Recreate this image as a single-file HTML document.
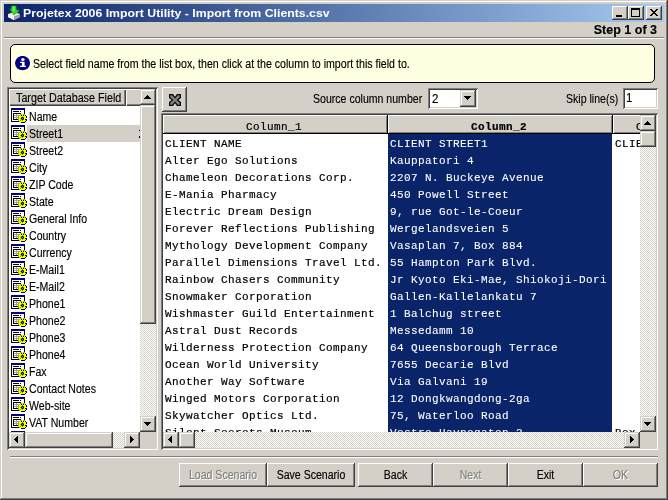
<!DOCTYPE html>
<html>
<head>
<meta charset="utf-8">
<title>Projetex 2006 Import Utility</title>
<style>
*{box-sizing:border-box;margin:0;padding:0}
html,body{width:668px;height:500px;overflow:hidden;background:#d4d0c8}
body{font-family:"Liberation Sans",sans-serif;font-size:12px;color:#000;position:relative}
.abs{position:absolute}
#win{position:absolute;left:0;top:0;width:668px;height:500px;background:#d4d0c8;will-change:transform;
 box-shadow:inset -1px -1px #404040,inset 1px 1px #d4d0c8,inset -2px -2px #808080,inset 2px 2px #fff}
#title{position:absolute;left:4px;top:4px;width:660px;height:18px;
 background:linear-gradient(90deg,#0a246a 0%,#a6caf0 100%)}
#ttext{position:absolute;left:23px;top:6px;height:14px;line-height:14px;font-size:11px;font-weight:bold;color:#fff;white-space:nowrap;
 transform-origin:0 0;transform:scaleX(1.117)}
.cb{position:absolute;top:6px;width:16px;height:14px;background:#d4d0c8;
 box-shadow:inset -1px -1px #404040,inset 1px 1px #fff,inset -2px -2px #808080,inset 2px 2px #d4d0c8}
.t{position:absolute;white-space:nowrap;transform-origin:0 0;transform:scaleX(.88);font-size:12px;line-height:14px;height:14px;-webkit-text-stroke:.15px currentColor}
.tr{transform-origin:100% 0}
.tc{transform-origin:50% 0;text-align:center}
.raised{background:#d4d0c8;box-shadow:inset -1px -1px #404040,inset 1px 1px #fff,inset -2px -2px #808080,inset 2px 2px #d4d0c8}
.btn{position:absolute;top:463px;height:24px;background:#d4d0c8;
 box-shadow:inset -1px -1px #404040,inset 1px 1px #fff,inset -2px -2px #808080}
.btn .t{left:0;right:0;top:5px}
.dis{color:#808080;text-shadow:1px 1px 0 #fff}
.sunken{position:absolute;box-shadow:inset 1px 1px #808080,inset -1px -1px #fff,inset 2px 2px #404040,inset -2px -2px #d4d0c8}
.sb{position:absolute;width:16px;height:16px;background:#d4d0c8;
 box-shadow:inset -1px -1px #404040,inset 1px 1px #d4d0c8,inset -2px -2px #808080,inset 2px 2px #fff}
.track{position:absolute;background-color:#fff;
 background-image:linear-gradient(45deg,#d4d0c8 25%,transparent 25%,transparent 75%,#d4d0c8 75%),linear-gradient(45deg,#d4d0c8 25%,transparent 25%,transparent 75%,#d4d0c8 75%);
 background-size:2px 2px;background-position:0 0,1px 1px}
.ar{position:absolute;display:block}
.au{left:4px;top:6px}
.ad{left:4px;top:6px}
.al{left:5px;top:4px}
.arr{left:6px;top:4px}
.hd{position:absolute;background:#d4d0c8;box-shadow:inset 1px 1px #fff,inset -1px -1px #404040,inset -2px -2px #808080}
.ghd{box-shadow:inset 1px 1px #fff,inset -1px -1px #808080}
.li{position:absolute;left:9px;width:131px;height:17px}
.li svg{position:absolute;left:2px;top:0}
.li .t{left:20px;top:2px;line-height:15px;height:15px}
.mono{font-family:"Liberation Mono",monospace;font-size:11px;letter-spacing:.4px;white-space:pre;-webkit-text-stroke:.2px currentColor}
.row{position:absolute;height:17px;line-height:17px;left:0}
</style>
</head>
<body>
<svg width="0" height="0" style="position:absolute">
 <defs>
  <g id="fld" shape-rendering="crispEdges">
   <rect x="0" y="0" width="14" height="14" fill="#000"/>
   <rect x="1" y="2" width="12" height="11" fill="#fff"/>
   <rect x="0" y="0" width="14" height="2" fill="#000080"/>
   <rect x="2" y="3" width="6" height="1" fill="#000"/>
   <rect x="9" y="3" width="1" height="1" fill="#000"/>
   <rect x="2" y="5" width="8" height="7" fill="#000"/>
   <rect x="3" y="6" width="6" height="5" fill="#fff"/>
   <rect x="5" y="6" width="1" height="5" fill="#a0a0a0"/>
   <rect x="3" y="7" width="6" height="1" fill="#a0a0a0"/>
   <rect x="3" y="9" width="6" height="1" fill="#a0a0a0"/>
   <g><rect x="9" y="6" width="1" height="1" fill="#b0b000"/><rect x="10" y="6" width="1" height="1" fill="#b0b000"/><rect x="11" y="6" width="1" height="1" fill="#ffff00"/><rect x="12" y="6" width="1" height="1" fill="#b0b000"/><rect x="13" y="6" width="1" height="1" fill="#b0b000"/><rect x="8" y="7" width="1" height="1" fill="#b0b000"/><rect x="9" y="7" width="1" height="1" fill="#ffff00"/><rect x="10" y="7" width="1" height="1" fill="#000"/><rect x="11" y="7" width="1" height="1" fill="#ffff00"/><rect x="12" y="7" width="1" height="1" fill="#000"/><rect x="13" y="7" width="1" height="1" fill="#ffff00"/><rect x="14" y="7" width="1" height="1" fill="#000"/><rect x="7" y="8" width="1" height="1" fill="#b0b000"/><rect x="8" y="8" width="1" height="1" fill="#ffff00"/><rect x="9" y="8" width="1" height="1" fill="#ffff00"/><rect x="10" y="8" width="1" height="1" fill="#ffff00"/><rect x="11" y="8" width="1" height="1" fill="#00e000"/><rect x="12" y="8" width="1" height="1" fill="#ffff00"/><rect x="13" y="8" width="1" height="1" fill="#ffff00"/><rect x="14" y="8" width="1" height="1" fill="#ffff00"/><rect x="15" y="8" width="1" height="1" fill="#000"/><rect x="7" y="9" width="1" height="1" fill="#b0b000"/><rect x="8" y="9" width="1" height="1" fill="#ffff00"/><rect x="9" y="9" width="1" height="1" fill="#ffff00"/><rect x="10" y="9" width="1" height="1" fill="#707000"/><rect x="11" y="9" width="1" height="1" fill="#000"/><rect x="12" y="9" width="1" height="1" fill="#707000"/><rect x="13" y="9" width="1" height="1" fill="#ffff00"/><rect x="14" y="9" width="1" height="1" fill="#ffff00"/><rect x="15" y="9" width="1" height="1" fill="#000"/><rect x="7" y="10" width="1" height="1" fill="#b0b000"/><rect x="8" y="10" width="1" height="1" fill="#ffff00"/><rect x="9" y="10" width="1" height="1" fill="#00e000"/><rect x="10" y="10" width="1" height="1" fill="#000"/><rect x="11" y="10" width="1" height="1" fill="#808080"/><rect x="12" y="10" width="1" height="1" fill="#000"/><rect x="13" y="10" width="1" height="1" fill="#ffff00"/><rect x="14" y="10" width="1" height="1" fill="#ffff00"/><rect x="15" y="10" width="1" height="1" fill="#ffff00"/><rect x="7" y="11" width="1" height="1" fill="#b0b000"/><rect x="8" y="11" width="1" height="1" fill="#ffff00"/><rect x="9" y="11" width="1" height="1" fill="#ffff00"/><rect x="10" y="11" width="1" height="1" fill="#707000"/><rect x="11" y="11" width="1" height="1" fill="#000"/><rect x="12" y="11" width="1" height="1" fill="#707000"/><rect x="13" y="11" width="1" height="1" fill="#ffff00"/><rect x="14" y="11" width="1" height="1" fill="#000"/><rect x="15" y="11" width="1" height="1" fill="#000"/><rect x="7" y="12" width="1" height="1" fill="#b0b000"/><rect x="8" y="12" width="1" height="1" fill="#ffff00"/><rect x="9" y="12" width="1" height="1" fill="#00e000"/><rect x="10" y="12" width="1" height="1" fill="#ffff00"/><rect x="11" y="12" width="1" height="1" fill="#00e000"/><rect x="12" y="12" width="1" height="1" fill="#ffff00"/><rect x="13" y="12" width="1" height="1" fill="#ffff00"/><rect x="14" y="12" width="1" height="1" fill="#ffff00"/><rect x="15" y="12" width="1" height="1" fill="#000"/><rect x="8" y="13" width="1" height="1" fill="#b0b000"/><rect x="9" y="13" width="1" height="1" fill="#ffff00"/><rect x="10" y="13" width="1" height="1" fill="#ffff00"/><rect x="11" y="13" width="1" height="1" fill="#ffff00"/><rect x="12" y="13" width="1" height="1" fill="#ffff00"/><rect x="13" y="13" width="1" height="1" fill="#ffff00"/><rect x="14" y="13" width="1" height="1" fill="#000"/><rect x="10" y="14" width="1" height="1" fill="#000"/><rect x="11" y="14" width="1" height="1" fill="#000"/><rect x="12" y="14" width="1" height="1" fill="#000"/><rect x="13" y="14" width="1" height="1" fill="#000"/></g>
  </g>
 </defs>
</svg>
<div id="win">
 <!-- title bar -->
 <div id="title"></div>
 <svg class="abs" style="left:6px;top:4px" width="18" height="18" viewBox="0 0 18 18">
  <path d="M2 10 L8 8 L14 10 L14 13 L8 16 L2 13 Z" fill="#e8e8e8"/>
  <path d="M8 12.5 L14 10 L14 13 L8 16 Z" fill="#a0a0a0"/>
  <path d="M2 10 L8 12.5 L8 16 L2 13 Z" fill="#f4f4f4"/>
  <path d="M5.6 2 L10 2 L10.1 5.4 L13.3 7 L7.8 11 L3.9 4.9 L5.6 4.7 Z" fill="#2fd422" stroke="#18b010" stroke-width=".5"/><path d="M6.8 2.6 L8.6 2.6 L8.8 6.4 L7.6 8.6 L6.6 5.4 Z" fill="#7bea6a"/>
 </svg>
 <div id="ttext">Projetex 2006 Import Utility - Import from Clients.csv</div>
 <div class="cb" style="left:612px"><div class="abs" style="left:4px;top:9px;width:6px;height:2px;background:#000"></div></div>
 <div class="cb" style="left:628px"><div class="abs" style="left:3px;top:2px;width:9px;height:9px;border:1px solid #000;border-top-width:2px"></div></div>
 <div class="cb" style="left:646px">
  <svg class="abs" style="left:4px;top:3px" width="8" height="7" viewBox="0 0 8 7" shape-rendering="crispEdges"><path d="M0 0h2v1h1v1h2v-1h1v-1h2v1h-1v1h-1v1h-1v1h1v1h1v1h1v1h-2v-1h-1v-1h-2v1h-1v1h-2v-1h1v-1h1v-1h1v-1h-1v-1h-1v-1h-1z" fill="#000"/></svg>
 </div>

 <div class="t tr" style="right:11px;top:23px;font-size:12.5px;font-weight:bold;transform:none">Step 1 of 3</div>
 <div class="abs" style="left:4px;top:37px;width:660px;height:1px;background:#808080"></div>
 <div class="abs" style="left:4px;top:38px;width:660px;height:1px;background:#fff"></div>

 <!-- info panel -->
 <div class="abs" style="left:10px;top:44px;width:645px;height:39px;background:#ffffe1;border:1px solid #000;border-radius:5px"></div>
 <svg class="abs" style="left:15px;top:56px" width="16" height="16" viewBox="0 0 16 16">
  <ellipse cx="7.55" cy="7.1" rx="7.55" ry="7.2" fill="#000080"/>
  <ellipse cx="7.9" cy="3.6" rx="1.7" ry="1.5" fill="#fff"/>
  <path d="M5 5.8 H9.6 V9.7 H10.9 V11.1 H5 V9.7 H6.9 V7 H5 Z" fill="#fff"/>
 </svg>
 <div class="t" style="left:32.5px;top:57px;transform:scaleX(.884)">Select field name from the list box, then click at the column to import this field to.</div>

 <!-- list -->
 <div class="sunken" style="left:7px;top:87px;width:151px;height:363px;background:#fff"></div>
 <div class="hd" style="left:9px;top:89px;width:117px;height:17px"><div class="t" style="left:7px;top:2px;transform:scaleX(.897)">Target Database Field</div></div>
 <div class="hd" style="left:126px;top:89px;width:30px;height:17px"></div>
 <div id="items">
<div class="li" style="top:108px;"><svg width="18" height="17" viewBox="0 0 18 17"><use href="#fld"/></svg><div class="t">Name</div></div>
<div class="li" style="top:125px;"><div class="abs" style="left:18px;top:0;width:113px;height:17px;background:#d4d0c8"></div><div class="abs" style="left:130px;top:5px;width:1px;height:1px;background:#000"></div><div class="abs" style="left:130px;top:11px;width:1px;height:2px;background:#000"></div><svg width="18" height="17" viewBox="0 0 18 17"><use href="#fld"/></svg><div class="t">Street1</div></div>
<div class="li" style="top:142px;"><svg width="18" height="17" viewBox="0 0 18 17"><use href="#fld"/></svg><div class="t">Street2</div></div>
<div class="li" style="top:159px;"><svg width="18" height="17" viewBox="0 0 18 17"><use href="#fld"/></svg><div class="t">City</div></div>
<div class="li" style="top:176px;"><svg width="18" height="17" viewBox="0 0 18 17"><use href="#fld"/></svg><div class="t">ZIP Code</div></div>
<div class="li" style="top:193px;"><svg width="18" height="17" viewBox="0 0 18 17"><use href="#fld"/></svg><div class="t">State</div></div>
<div class="li" style="top:210px;"><svg width="18" height="17" viewBox="0 0 18 17"><use href="#fld"/></svg><div class="t">General Info</div></div>
<div class="li" style="top:227px;"><svg width="18" height="17" viewBox="0 0 18 17"><use href="#fld"/></svg><div class="t">Country</div></div>
<div class="li" style="top:244px;"><svg width="18" height="17" viewBox="0 0 18 17"><use href="#fld"/></svg><div class="t">Currency</div></div>
<div class="li" style="top:261px;"><svg width="18" height="17" viewBox="0 0 18 17"><use href="#fld"/></svg><div class="t">E-Mail1</div></div>
<div class="li" style="top:278px;"><svg width="18" height="17" viewBox="0 0 18 17"><use href="#fld"/></svg><div class="t">E-Mail2</div></div>
<div class="li" style="top:295px;"><svg width="18" height="17" viewBox="0 0 18 17"><use href="#fld"/></svg><div class="t">Phone1</div></div>
<div class="li" style="top:312px;"><svg width="18" height="17" viewBox="0 0 18 17"><use href="#fld"/></svg><div class="t">Phone2</div></div>
<div class="li" style="top:329px;"><svg width="18" height="17" viewBox="0 0 18 17"><use href="#fld"/></svg><div class="t">Phone3</div></div>
<div class="li" style="top:346px;"><svg width="18" height="17" viewBox="0 0 18 17"><use href="#fld"/></svg><div class="t">Phone4</div></div>
<div class="li" style="top:363px;"><svg width="18" height="17" viewBox="0 0 18 17"><use href="#fld"/></svg><div class="t">Fax</div></div>
<div class="li" style="top:380px;"><svg width="18" height="17" viewBox="0 0 18 17"><use href="#fld"/></svg><div class="t">Contact Notes</div></div>
<div class="li" style="top:397px;"><svg width="18" height="17" viewBox="0 0 18 17"><use href="#fld"/></svg><div class="t">Web-site</div></div>
<div class="li" style="top:414px;"><svg width="18" height="17" viewBox="0 0 18 17"><use href="#fld"/></svg><div class="t">VAT Number</div></div>
<div class="li" style="top:431px;overflow:hidden;height:1px;"><svg width="18" height="17" viewBox="0 0 18 17"><use href="#fld"/></svg><div class="t"></div></div>
</div>
 <!-- list vscroll -->
 <div class="track" style="left:140px;top:89px;width:16px;height:343px"></div>
 <div class="sb" style="left:140px;top:89px"><svg class="ar au" width="7" height="4" viewBox="0 0 7 4" shape-rendering="crispEdges"><path d="M3 0h1v1h1v1h1v1h1v1h-7v-1h1v-1h1v-1h1z" fill="#000"/></svg></div>
 <div class="sb" style="left:140px;top:105px;height:219px"></div>
 <div class="sb" style="left:140px;top:416px"><svg class="ar ad" width="7" height="4" viewBox="0 0 7 4" shape-rendering="crispEdges"><path d="M0 0h7v1h-1v1h-1v1h-1v1h-1v-1h-1v-1h-1v-1h-1z" fill="#000"/></svg></div>
 <!-- list hscroll -->
 <div class="track" style="left:9px;top:432px;width:131px;height:16px"></div>
 <div class="sb" style="left:9px;top:432px"><svg class="ar al" width="4" height="7" viewBox="0 0 4 7" shape-rendering="crispEdges"><path d="M3 0h1v7h-1v-1h-1v-1h-1v-1h-1v-1h1v-1h1v-1h1z" fill="#000"/></svg></div>
 <div class="sb" style="left:25px;top:432px;width:88px"></div>
 <div class="sb" style="left:124px;top:432px"><svg class="ar arr" width="4" height="7" viewBox="0 0 4 7" shape-rendering="crispEdges"><path d="M0 0h1v1h1v1h1v1h1v1h-1v1h-1v1h-1v1h-1z" fill="#000"/></svg></div>
 <div class="abs" style="left:140px;top:432px;width:16px;height:16px;background:#d4d0c8"></div>

 <!-- toolbar row -->
 <div class="abs raised" style="left:162px;top:87px;width:25px;height:25px;box-shadow:inset -1px -1px #404040,inset 1px 1px #fff,inset -2px -2px #808080">
  <svg class="abs" style="left:7px;top:7px" width="12" height="12" viewBox="0 0 12 12">
   <path d="M0 0H4L6 2.7L8 0H12V4L9.3 6L12 8V12H8L6 9.3L4 12H0V8L2.7 6L0 4Z" fill="#000"/>
   <path d="M1.2 1.2H3.2L6 4.4L8.8 1.2H10.8V3.2L7.6 6L10.8 8.8V10.8H8.8L6 7.6L3.2 10.8H1.2V8.8L4.4 6L1.2 3.2Z" fill="#808080"/>
  </svg>
 </div>
 <div class="t" style="left:313px;top:92px">Source column number</div>
 <div class="sunken" style="left:428px;top:88px;width:50px;height:21px;background:#fff"></div>
 <div class="t" style="left:432px;top:92px;font-size:12.5px;transform:scaleX(.92)">2</div>
 <div class="sb" style="left:460px;top:90px;width:16px;height:17px"><svg class="ar ad" width="7" height="4" viewBox="0 0 7 4" shape-rendering="crispEdges"><path d="M0 0h7v1h-1v1h-1v1h-1v1h-1v-1h-1v-1h-1v-1h-1z" fill="#000"/></svg></div>
 <div class="t" style="left:566px;top:92px">Skip line(s)</div>
 <div class="sunken" style="left:623px;top:88px;width:35px;height:21px;background:#fff"></div>
 <div class="t" style="left:626px;top:91px;font-size:12.5px;transform:scaleX(.92)">1</div>

 <!-- grid -->
 <div class="sunken" style="left:161px;top:113px;width:497px;height:337px;background:#fff"></div>
 <div class="abs" id="grid" style="left:163px;top:115px;width:477px;height:317px;overflow:hidden;background:#fff">
  <div class="abs" style="left:225px;top:19px;width:224px;height:298px;background:#0a246a"></div>
  <div class="abs" style="left:0;top:0;width:477px;height:19px;background:#000"></div>
  <div class="hd ghd" style="left:0;top:0;width:224px;height:18px"><div class="mono abs" style="left:-1px;width:224px;top:6px;text-align:center;line-height:13px">Column_1</div></div>
  <div class="hd ghd" style="left:225px;top:0;width:224px;height:18px"><div class="mono abs" style="left:-1px;width:224px;top:6px;text-align:center;line-height:13px;font-weight:bold">Column_2</div></div>
  <div class="hd ghd" style="left:450px;top:0;width:104px;height:18px"><div class="mono abs" style="left:-1px;width:104px;top:6px;text-align:center;line-height:13px">Column_3</div></div>
  <div id="c1" class="abs mono" style="margin-top:2px;left:2px;top:19px"><div class="row" style="top:0px">CLIENT NAME</div><div class="row" style="top:17px">Alter Ego Solutions</div><div class="row" style="top:34px">Chameleon Decorations Corp.</div><div class="row" style="top:51px">E-Mania Pharmacy</div><div class="row" style="top:68px">Electric Dream Design</div><div class="row" style="top:85px">Forever Reflections Publishing</div><div class="row" style="top:102px">Mythology Development Company</div><div class="row" style="top:119px">Parallel Dimensions Travel Ltd.</div><div class="row" style="top:136px">Rainbow Chasers Community</div><div class="row" style="top:153px">Snowmaker Corporation</div><div class="row" style="top:170px">Wishmaster Guild Entertainment</div><div class="row" style="top:187px">Astral Dust Records</div><div class="row" style="top:204px">Wilderness Protection Company</div><div class="row" style="top:221px">Ocean World University</div><div class="row" style="top:238px">Another Way Software</div><div class="row" style="top:255px">Winged Motors Corporation</div><div class="row" style="top:272px">Skywatcher Optics Ltd.</div><div class="row" style="top:289px">Silent Secrets Museum</div></div>
  <div id="c2" class="abs mono" style="-webkit-text-stroke-width:.08px;margin-top:2px;left:227px;top:19px;color:#fff"><div class="row" style="top:0px">CLIENT STREET1</div><div class="row" style="top:17px">Kauppatori 4</div><div class="row" style="top:34px">2207 N. Buckeye Avenue</div><div class="row" style="top:51px">450 Powell Street</div><div class="row" style="top:68px">9, rue Got-le-Coeur</div><div class="row" style="top:85px">Wergelandsveien 5</div><div class="row" style="top:102px">Vasaplan 7, Box 884</div><div class="row" style="top:119px">55 Hampton Park Blvd.</div><div class="row" style="top:136px">Jr Kyoto Eki-Mae, Shiokoji-Dori</div><div class="row" style="top:153px">Gallen-Kallelankatu 7</div><div class="row" style="top:170px">1 Balchug street</div><div class="row" style="top:187px">Messedamm 10</div><div class="row" style="top:204px">64 Queensborough Terrace</div><div class="row" style="top:221px">7655 Decarie Blvd</div><div class="row" style="top:238px">Via Galvani 19</div><div class="row" style="top:255px">12 Dongkwangdong-2ga</div><div class="row" style="top:272px">75, Waterloo Road</div><div class="row" style="top:289px">Vestre Havnegaten 3</div></div>
  <div id="c3" class="abs mono" style="margin-top:2px;left:452px;top:19px"><div class="row" style="top:0px">CLIENT STREET2</div><div class="row" style="top:289px">Box</div></div>
 </div>
 <!-- grid vscroll -->
 <div class="track" style="left:640px;top:115px;width:16px;height:317px"></div>
 <div class="sb" style="left:640px;top:115px"><svg class="ar au" width="7" height="4" viewBox="0 0 7 4" shape-rendering="crispEdges"><path d="M3 0h1v1h1v1h1v1h1v1h-7v-1h1v-1h1v-1h1z" fill="#000"/></svg></div>
 <div class="sb" style="left:640px;top:131px"></div>
 <div class="sb" style="left:640px;top:416px"><svg class="ar ad" width="7" height="4" viewBox="0 0 7 4" shape-rendering="crispEdges"><path d="M0 0h7v1h-1v1h-1v1h-1v1h-1v-1h-1v-1h-1v-1h-1z" fill="#000"/></svg></div>
 <!-- grid hscroll -->
 <div class="track" style="left:163px;top:432px;width:477px;height:16px"></div>
 <div class="sb" style="left:163px;top:432px"><svg class="ar al" width="4" height="7" viewBox="0 0 4 7" shape-rendering="crispEdges"><path d="M3 0h1v7h-1v-1h-1v-1h-1v-1h-1v-1h1v-1h1v-1h1z" fill="#000"/></svg></div>
 <div class="sb" style="left:179px;top:432px"></div>
 <div class="sb" style="left:624px;top:432px"><svg class="ar arr" width="4" height="7" viewBox="0 0 4 7" shape-rendering="crispEdges"><path d="M0 0h1v1h1v1h1v1h1v1h-1v1h-1v1h-1v1h-1z" fill="#000"/></svg></div>
 <div class="abs" style="left:640px;top:432px;width:16px;height:16px;background:#d4d0c8"></div>

 <!-- bottom -->
 <div class="abs" style="left:10px;top:456px;width:648px;height:1px;background:#808080"></div>
 <div class="abs" style="left:10px;top:457px;width:648px;height:1px;background:#fff"></div>
 <div class="btn" style="left:179px;width:88px"><div class="t tc dis">Load Scenario</div></div>
 <div class="btn" style="left:267px;width:88px"><div class="t tc">Save Scenario</div></div>
 <div class="btn" style="left:358px;width:75px"><div class="t tc">Back</div></div>
 <div class="btn" style="left:433px;width:75px"><div class="t tc dis">Next</div></div>
 <div class="btn" style="left:508px;width:75px"><div class="t tc">Exit</div></div>
 <div class="btn" style="left:583px;width:75px"><div class="t tc dis">OK</div></div>
</div>
</body>
</html>
